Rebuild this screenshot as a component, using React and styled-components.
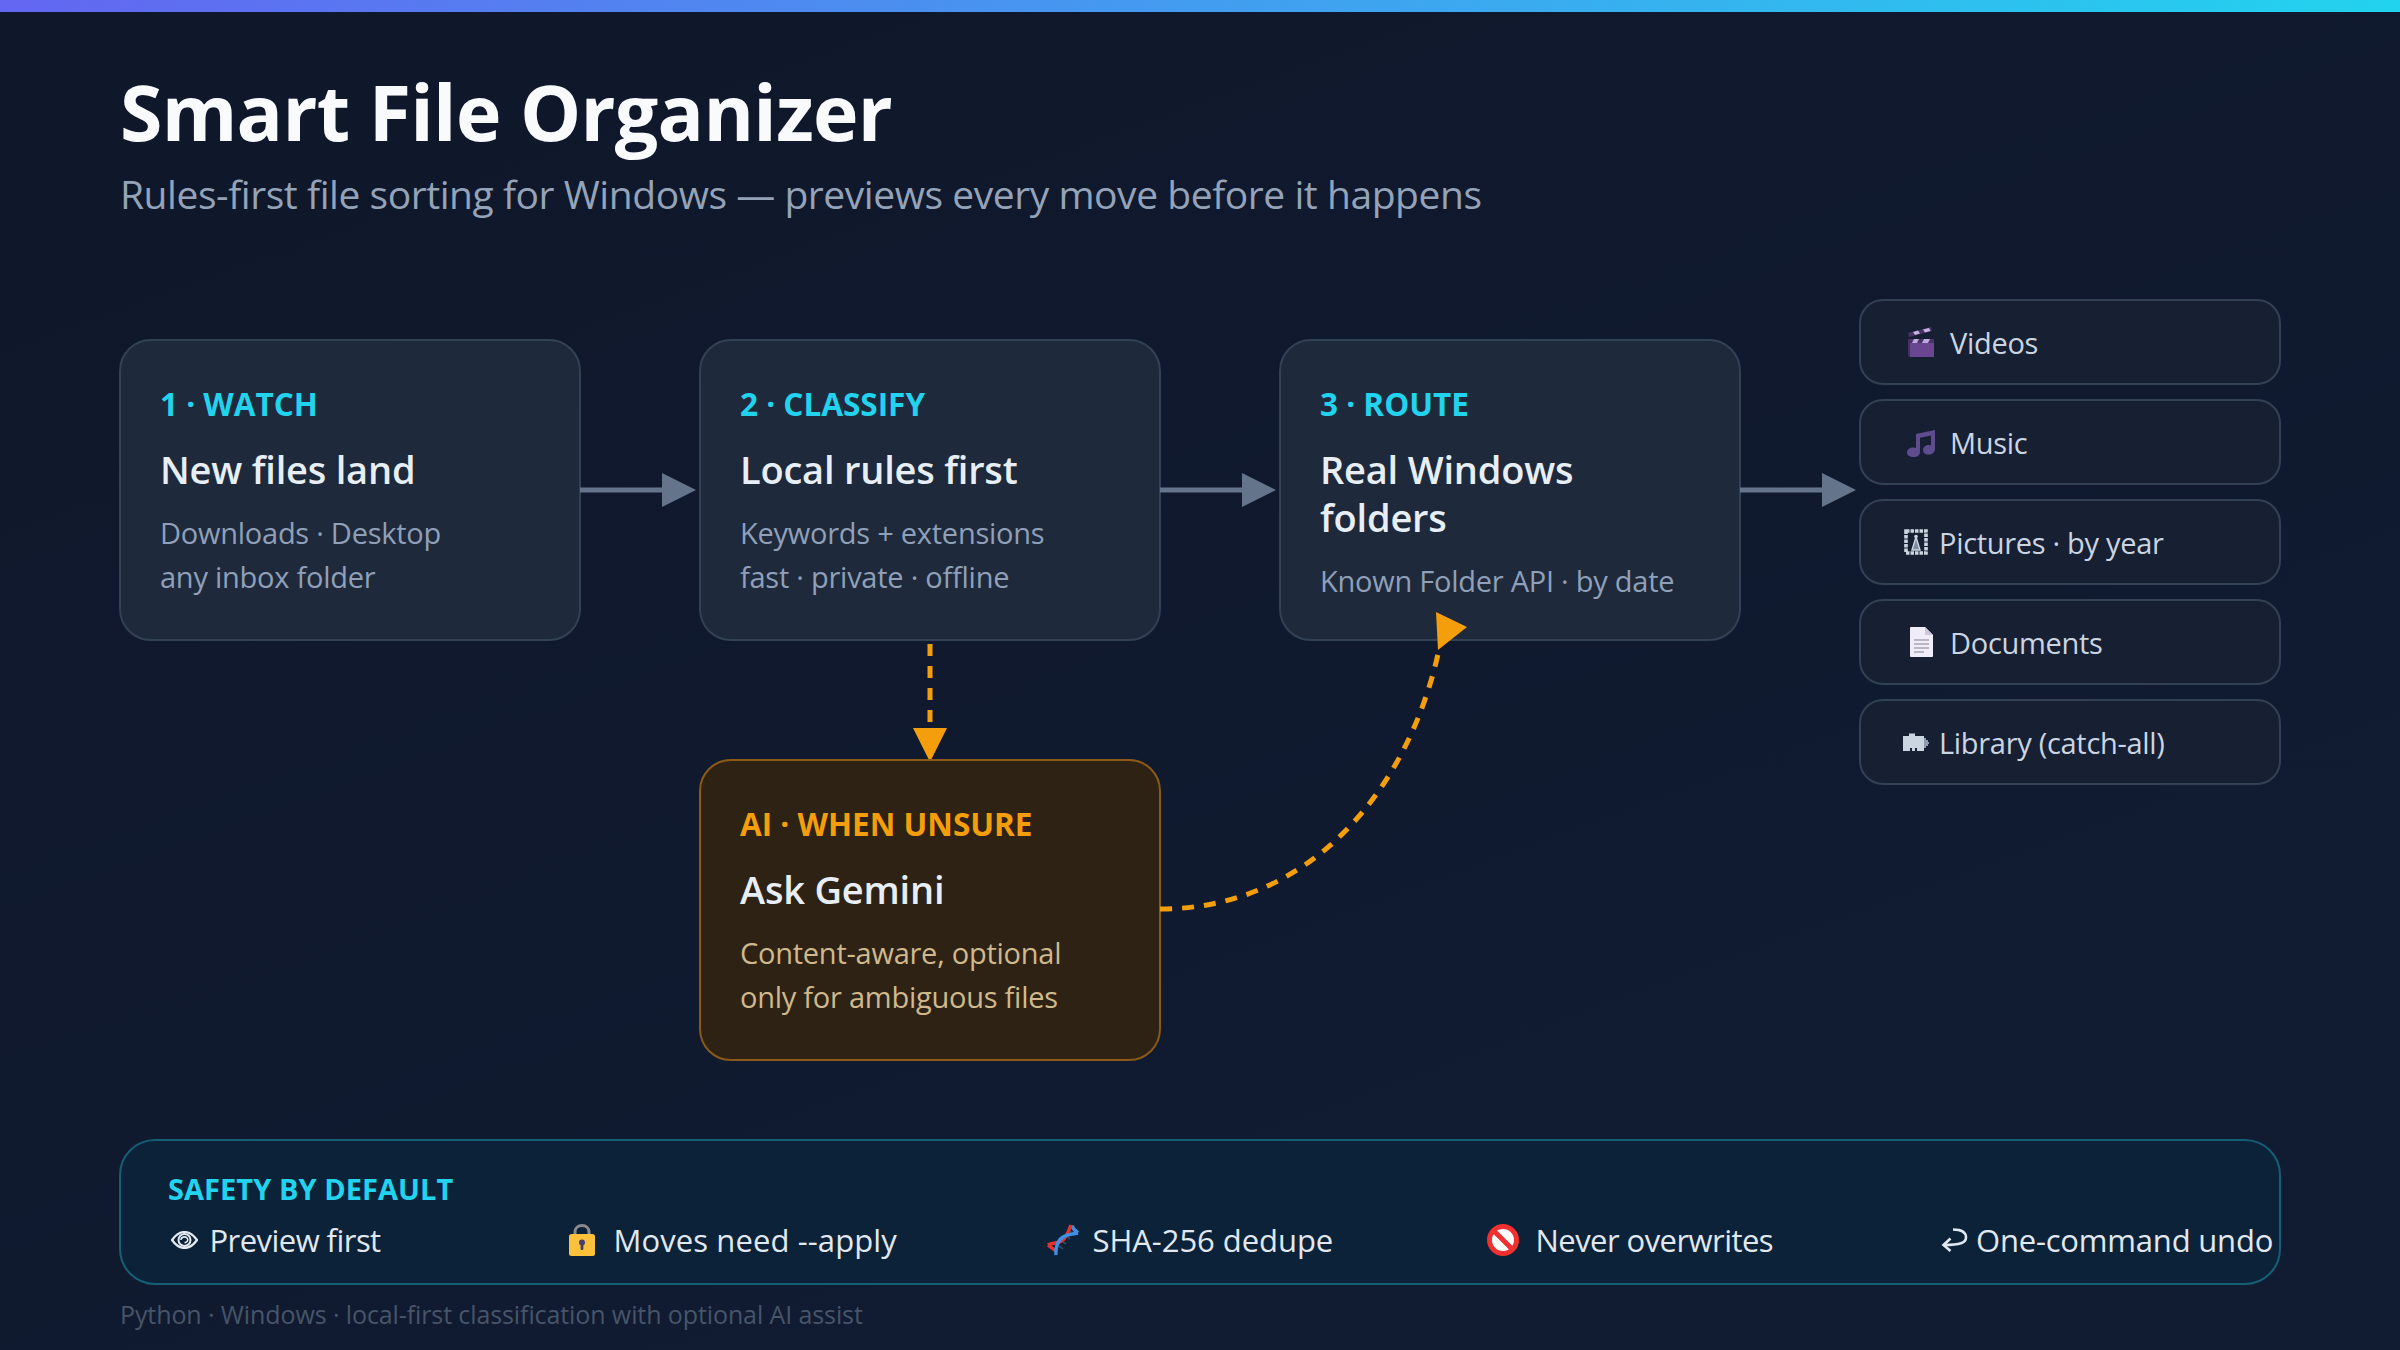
import React from 'react'
import styled, { createGlobalStyle } from 'styled-components'

const GlobalStyle = createGlobalStyle`
    html, body {
        margin: 0;
        padding: 0;
    }
    body {
        width: 2400px;
        height: 1350px;
        overflow: hidden;
        font-family: "Open Sans", "Noto Sans", sans-serif;
    }
`

const Page = styled.div`
    width: 2400px;
    height: 1350px;
    background: linear-gradient(160deg, #0f172a, #111c33);
    box-sizing: border-box;
`

const TopBar = styled.div`
    height: 12px;
    background: linear-gradient(90deg, #6366f1, #22d3ee);
`

const Content = styled.div`
    padding: 0 120px;
`

const Title = styled.h1`
    margin: 52px 0 0;
    font-size: 77px;
    line-height: 96px;
    font-weight: 700;
    letter-spacing: -0.7px;
    color: #f8fafc;
`

const Subtitle = styled.p`
    margin: 6px 0 0;
    font-size: 39px;
    line-height: 56px;
    font-weight: 400;
    letter-spacing: -0.45px;
    color: #94a3b8;
`

const Diagram = styled.div`
    position: relative;
    margin-top: 78px;
    display: grid;
    grid-template-columns: 460px 120px 460px 120px 460px 120px 420px;
    grid-template-rows: 40px 300px 120px 300px;
`

const Card = styled.section`
    box-sizing: border-box;
    grid-column: ${p => p.$col};
    grid-row: ${p => p.$row};
    margin: -1px;
    padding: 43px 39px 0;
    border: 2px solid ${p => (p.$ai ? '#8a5a16' : '#334155')};
    border-radius: 32px;
    background: ${p => (p.$ai ? '#2d2214' : '#1e293b')};
`

const Label = styled.div`
    font-size: 31.5px;
    line-height: 40px;
    font-weight: 700;
    color: ${p => (p.$ai ? '#f59e0b' : '#22d3ee')};
`

const CardTitle = styled.h2`
    margin: 21px 0 17.5px;
    font-size: 38px;
    line-height: 48px;
    font-weight: 600;
    letter-spacing: -0.2px;
    color: #e8eef6;
`

const Desc = styled.div`
    font-size: 29px;
    line-height: 44px;
    letter-spacing: -0.25px;
    color: ${p => (p.$ai ? '#d0b98c' : '#8fa0b8')};
`

const FlowArrow = styled.svg`
    grid-row: 2;
    grid-column: ${p => p.$col};
    align-self: center;
    display: block;
`

const DownArrow = styled.svg`
    grid-row: 3;
    grid-column: 3;
    justify-self: center;
    align-self: start;
    display: block;
    overflow: visible;
`

const CurveLayer = styled.svg`
    position: absolute;
    left: 0;
    top: 0;
    pointer-events: none;
`

const DestList = styled.div`
    grid-column: 7;
    grid-row: 1 / 5;
    margin: -1px;
    display: flex;
    flex-direction: column;
    gap: 14px;
`

const Dest = styled.div`
    box-sizing: border-box;
    height: 86px;
    padding-left: 41px;
    display: flex;
    align-items: center;
    border: 2px solid #334155;
    border-radius: 24px;
    background: #172033;
    font-size: 29px;
    letter-spacing: -0.3px;
    color: #cbd5e1;
`

const DestIcon = styled.span`
    box-sizing: border-box;
    width: ${p => (p.$narrow ? 37 : 48)}px;
    padding-right: 10px;
    display: flex;
    justify-content: center;
    align-items: center;
    flex-shrink: 0;
`

const SafetyBar = styled.section`
    box-sizing: border-box;
    height: 146px;
    margin: 79px -1px 0;
    padding: 28px 6px 0 47px;
    border: 2px solid #155e75;
    border-radius: 36px;
    background: #0c2239;
`

const SafetyTitle = styled.div`
    font-size: 29px;
    line-height: 40px;
    font-weight: 700;
    letter-spacing: 0.05px;
    color: #22d3ee;
`

const SafetyRow = styled.div`
    margin: 10px 0 0 3px;
    display: grid;
    grid-template-columns: 398px 478px 440px 453px auto;
`

const SafetyItem = styled.div`
    display: flex;
    align-items: center;
    gap: ${p => p.$gap}px;
    font-size: 31px;
    line-height: 42px;
    white-space: nowrap;
    letter-spacing: ${p => p.$tight}px;
    color: #e2e8f0;
`

const Footer = styled.footer`
    margin-top: 12px;
    font-size: 25px;
    line-height: 34px;
    letter-spacing: -0.1px;
    color: #475569;
`

const ClapperIcon = () => (
    <svg width="28" height="30" viewBox="0 0 28 30">
        <path d="M1 12 L27 12 L27 30 L3 30 L1 28 Z" fill="#6a4590" />
        <path d="M1 12 L3 12 L3 30 L1 28 Z" fill="#47305f" />
        <path d="M3 12 H27 V16 H3 Z" fill="#4d3268" />
        <path d="M7 12 H12 L10 16 H5 Z M17 12 H23 L21 16 H15 Z" fill="#b9a9de" />
        <path d="M1 6 L24 0 L25 4 L2 10 Z" fill="#4d3268" />
        <path d="M6 5 L11 3.6 L13 6.6 L8 8 Z M16 2.4 L22 1 L23.5 4 L18 5.4 Z" fill="#c3b4e6" />
    </svg>
)

const MusicIcon = () => (
    <svg width="28" height="30" viewBox="0 0 28 30">
        <path
            d="M9 7 L28 3 V22 C28 25.5 25 27.5 21.5 27.5 C18 27.5 16 25.5 16 23 C16 20 19 18 22 18 C23 18 23.6 18.2 24 18.4 V8.5 L13 10.8 V25 C13 28 10.5 30 6.5 30 C3 30 0 28.5 0 25.5 C0 22.5 3 20.5 6 20.5 C7.5 20.5 8.5 20.8 9 21 Z"
            fill="#5f4c8e"
        />
    </svg>
)

const FrameIcon = () => (
    <svg width="24" height="26" viewBox="0 0 24 26" fill="none" stroke="#cbd5e1">
        <path d="M2 2 H22 V24 H2 Z" strokeWidth="3.6" strokeDasharray="3.5 1" />
        <path d="M8 21 L12 8 L16 21 Z" fill="#7f8ca3" stroke="#cbd5e1" strokeWidth="1.4" />
        <circle cx="12" cy="7.5" r="1.8" fill="#cbd5e1" stroke="none" />
    </svg>
)

const DocIcon = () => (
    <svg width="23" height="30" viewBox="0 0 23 30">
        <path d="M1 0 H15 L23 8 V29 Q23 30 22 30 H1 Q0 30 0 29 V1 Q0 0 1 0 Z" fill="#f1edf8" />
        <path d="M15 0 L23 8 H16 Q15 8 15 7 Z" fill="#cfc8dc" />
        <path d="M4 13 H19 M4 17 H19 M4 21 H19 M4 25 H14" stroke="#a8a2b6" strokeWidth="1.4" />
    </svg>
)

const CardFileIcon = () => (
    <svg width="26" height="18" viewBox="0 0 26 18">
        <path d="M0 3 H6 V0.5 H12 V3 H21 V18 H14 V15 H12 V18 H9 V15 H7 V18 H0 Z" fill="#cbd5e1" />
        <path d="M21 5 H23 V7 H25 V9 H26 V11 H25 V13 H23 V15 H21 Z" fill="#8f9bb0" />
    </svg>
)

const EyeIcon = () => (
    <svg width="27" height="18" viewBox="0 0 27 18" fill="none" stroke="#e6ebf2">
        <path d="M1 9 C6 2 10 1 13.5 1 C17 1 21 2 26 9 C21 16 17 17 13.5 17 C10 17 6 16 1 9 Z" strokeWidth="2.2" />
        <circle cx="13.5" cy="9" r="6" strokeWidth="2" />
        <path d="M10 9 C10 6 14 5 16 7 C18 9 16 12 13.5 11.5" strokeWidth="1.6" />
    </svg>
)

const LockIcon = () => (
    <svg width="26" height="32" viewBox="0 0 26 32">
        <path d="M6 12 V8 C6 4 9 1.5 13 1.5 C17 1.5 20 4 20 8 V12" fill="none" stroke="#8b8b8f" strokeWidth="3" />
        <rect x="0" y="10" width="26" height="22" rx="2.5" fill="#fbc13a" />
        <circle cx="13" cy="18.5" r="3" fill="#453f6d" />
        <rect x="11.6" y="18" width="2.8" height="8" rx="1" fill="#453f6d" />
    </svg>
)

const DnaIcon = () => (
    <svg width="32" height="32" viewBox="0 0 32 32" fill="none">
        <path d="M12 22 L16 25 M15 17 L19 20 M19 12 L23 15 M21 7 L26 9" stroke="#39435a" strokeWidth="2" />
        <path d="M25 1.5 C26 5 28 7 31 9" stroke="#3f8fe6" strokeWidth="3.5" />
        <path d="M1 21 C4 23 6 25 9 27" stroke="#e8312f" strokeWidth="3.5" />
        <path d="M1 21 C6 18 13 20 17 15 C20 11 22 7 24 1" stroke="#e8312f" strokeWidth="3.5" />
        <path d="M9 31 C8 24 11 16 16 13 C21 10 27 10 31 9" stroke="#3f8fe6" strokeWidth="3.5" />
    </svg>
)

const NoEntryIcon = () => (
    <svg width="32" height="32" viewBox="0 0 32 32">
        <circle cx="16" cy="16" r="13.5" fill="#fff" stroke="#f2302f" strokeWidth="5" />
        <path d="M7 7 L25 25" stroke="#f2302f" strokeWidth="5" />
    </svg>
)

const UndoIcon = () => (
    <svg width="28" height="24" viewBox="0 0 28 24" fill="none" stroke="#e2e8f0" strokeWidth="2.6">
        <path d="M13 1.5 C21 1.5 26 4 26 9.5 C26 15 20 17 4 17" />
        <path d="M10.5 10.5 L3.5 17 L10.5 23" />
    </svg>
)

const ArrowRight = ({ col }) => (
    <FlowArrow $col={col} width="120" height="34" viewBox="0 0 120 34">
        <rect x="0" y="14.5" width="84" height="5" fill="#64748b" />
        <polygon points="82,0 116,17 82,34" fill="#64748b" />
    </FlowArrow>
)

const DESTINATIONS = [
    { name: 'Videos', icon: <ClapperIcon /> },
    { name: 'Music', icon: <MusicIcon /> },
    { name: 'Pictures · by year', icon: <FrameIcon />, narrow: true },
    { name: 'Documents', icon: <DocIcon /> },
    { name: 'Library (catch-all)', icon: <CardFileIcon />, narrow: true },
]

const App = () => {
    return (
        <Page>
            <GlobalStyle />
            <TopBar />
            <Content>
                <Title>Smart File Organizer</Title>
                <Subtitle>Rules-first file sorting for Windows — previews every move before it happens</Subtitle>

                <Diagram>
                    <Card $col={1} $row={2}>
                        <Label>1 · WATCH</Label>
                        <CardTitle>New files land</CardTitle>
                        <Desc>Downloads · Desktop<br />any inbox folder</Desc>
                    </Card>
                    <ArrowRight col={2} />
                    <Card $col={3} $row={2}>
                        <Label>2 · CLASSIFY</Label>
                        <CardTitle>Local rules first</CardTitle>
                        <Desc>Keywords + extensions<br />fast · private · offline</Desc>
                    </Card>
                    <ArrowRight col={4} />
                    <Card $col={5} $row={2}>
                        <Label>3 · ROUTE</Label>
                        <CardTitle>Real Windows<br />folders</CardTitle>
                        <Desc>Known Folder API · by date</Desc>
                    </Card>
                    <ArrowRight col={6} />

                    <DestList>
                        {DESTINATIONS.map(d => (
                            <Dest key={d.name}>
                                <DestIcon $narrow={d.narrow}>{d.icon}</DestIcon>
                                {d.name}
                            </Dest>
                        ))}
                    </DestList>

                    <DownArrow width="34" height="122" viewBox="0 0 34 122">
                        <line x1="17" y1="4" x2="17" y2="88" stroke="#f59e0b" strokeWidth="5" strokeDasharray="12 10" />
                        <polygon points="0,88 34,88 17,122" fill="#f59e0b" />
                    </DownArrow>

                    <Card $col={3} $row={4} $ai>
                        <Label $ai>AI · WHEN UNSURE</Label>
                        <CardTitle>Ask Gemini</CardTitle>
                        <Desc $ai>Content-aware, optional<br />only for ambiguous files</Desc>
                    </Card>

                    {/* curved hand-off from the AI card back up to the route card */}
                    <CurveLayer width="2160" height="760" viewBox="0 0 2160 760">
                        <path
                            d="M1040 609 C1190 609 1290 490 1320 345"
                            fill="none"
                            stroke="#f59e0b"
                            strokeWidth="5"
                            strokeDasharray="12 10"
                        />
                        <polygon points="1316,312 1347,327 1318,350" fill="#f59e0b" />
                    </CurveLayer>
                </Diagram>

                <SafetyBar>
                    <SafetyTitle>SAFETY BY DEFAULT</SafetyTitle>
                    <SafetyRow>
                        <SafetyItem $gap={11.5} $tight={-0.55}><EyeIcon />Preview first</SafetyItem>
                        <SafetyItem $gap={18.5} $tight={0.1}><LockIcon />Moves need --apply</SafetyItem>
                        <SafetyItem $gap={13.5} $tight={-0.05}><DnaIcon />SHA-256 dedupe</SafetyItem>
                        <SafetyItem $gap={16.5} $tight={-0.55}><NoEntryIcon />Never overwrites</SafetyItem>
                        <SafetyItem $gap={8} $tight={-0.2}><UndoIcon />One-command undo</SafetyItem>
                    </SafetyRow>
                </SafetyBar>

                <Footer>Python · Windows · local-first classification with optional AI assist</Footer>
            </Content>
        </Page>
    )
}

export default App
